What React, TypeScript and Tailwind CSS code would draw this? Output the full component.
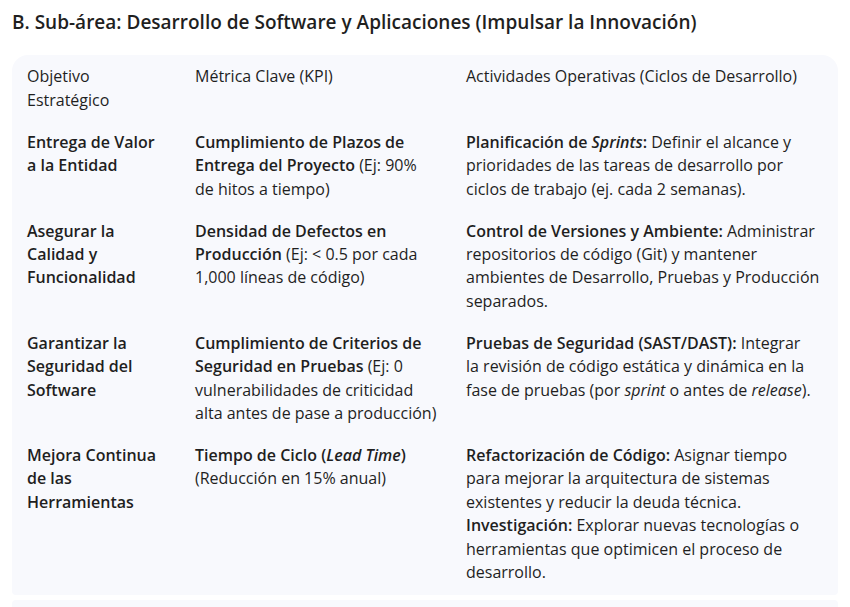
import React from 'react';

type Row = {
  goal: string;
  kpi: React.ReactNode;
  activities: React.ReactNode;
};

const rows: Row[] = [
  {
    goal: 'Entrega de Valor a la Entidad',
    kpi: (
      <>
        <b className="font-semibold">Cumplimiento de Plazos de Entrega del Proyecto</b> (Ej: 90%
        <br />
        de hitos a tiempo)
      </>
    ),
    activities: (
      <>
        <b className="font-semibold">
          Planificación de <i>Sprints</i>:
        </b>{' '}
        Definir el alcance y prioridades de las tareas de desarrollo por ciclos de trabajo (ej. cada 2 semanas).
      </>
    ),
  },
  {
    goal: 'Asegurar la Calidad y Funcionalidad',
    kpi: (
      <>
        <b className="font-semibold">Densidad de Defectos en Producción</b> (Ej: &lt; 0.5 por cada 1,000 líneas de código)
      </>
    ),
    activities: (
      <>
        <b className="font-semibold">Control de Versiones y Ambiente:</b> Administrar repositorios de código (Git) y
        mantener ambientes de Desarrollo, Pruebas y Producción separados.
      </>
    ),
  },
  {
    goal: 'Garantizar la Seguridad del Software',
    kpi: (
      <>
        <b className="font-semibold">Cumplimiento de Criterios de Seguridad en Pruebas</b> (Ej: 0 vulnerabilidades de
        criticidad alta antes de pase a producción)
      </>
    ),
    activities: (
      <>
        <b className="font-semibold">Pruebas de Seguridad (SAST/DAST):</b> Integrar
        <br />
        la revisión de código estática y dinámica en la fase de pruebas (por <i>sprint</i> o antes de{' '}
        <i>release</i>).
      </>
    ),
  },
  {
    goal: 'Mejora Continua de las Herramientas',
    kpi: (
      <>
        <b className="font-semibold">
          Tiempo de Ciclo (<i>Lead Time</i>)
        </b>{' '}
        (Reducción en 15% anual)
      </>
    ),
    activities: (
      <>
        <b className="font-semibold">Refactorización de Código:</b> Asignar tiempo para mejorar la arquitectura de
        sistemas existentes y reducir la deuda técnica.
        <br />
        <b className="font-semibold">Investigación:</b> Explorar nuevas tecnologías o herramientas que optimicen el
        proceso de desarrollo.
      </>
    ),
  },
];

export default function App() {
  return (
    <div className="min-h-[607px] overflow-hidden bg-white text-[#1f1f1f] font-['Open_Sans',sans-serif]">
      <h2 className="px-3 pt-[9px] text-[19px] leading-[26px] font-semibold">
        B. Sub-área: Desarrollo de Software y Aplicaciones (Impulsar la Innovación)
      </h2>

      <div className="mx-3 mt-[20px] rounded-t-2xl rounded-b-[4px] bg-[#f8f9fd] px-[15px] pt-px pb-[1px]">
        <div className="grid grid-cols-[168px_271px_1fr] text-[16px] leading-[23.4px]">
          <div className="py-[9.3px] pr-[30px]">Objetivo Estratégico</div>
          <div className="py-[9.3px] pr-[25px]">Métrica Clave (KPI)</div>
          <div className="py-[9.3px] pr-[2px]">Actividades Operativas (Ciclos de Desarrollo)</div>

          {rows.map((row, i) => (
            <React.Fragment key={i}>
              <div className="py-[9.3px] pr-[30px] font-semibold">{row.goal}</div>
              <div className="py-[9.3px] pr-[25px]">{row.kpi}</div>
              <div className="py-[9.3px] pr-[2px]">{row.activities}</div>
            </React.Fragment>
          ))}
        </div>
      </div>

      <div className="mx-3 mt-[5px] h-6 rounded-t-[4px] bg-[#f8f9fd]" />
    </div>
  );
}
